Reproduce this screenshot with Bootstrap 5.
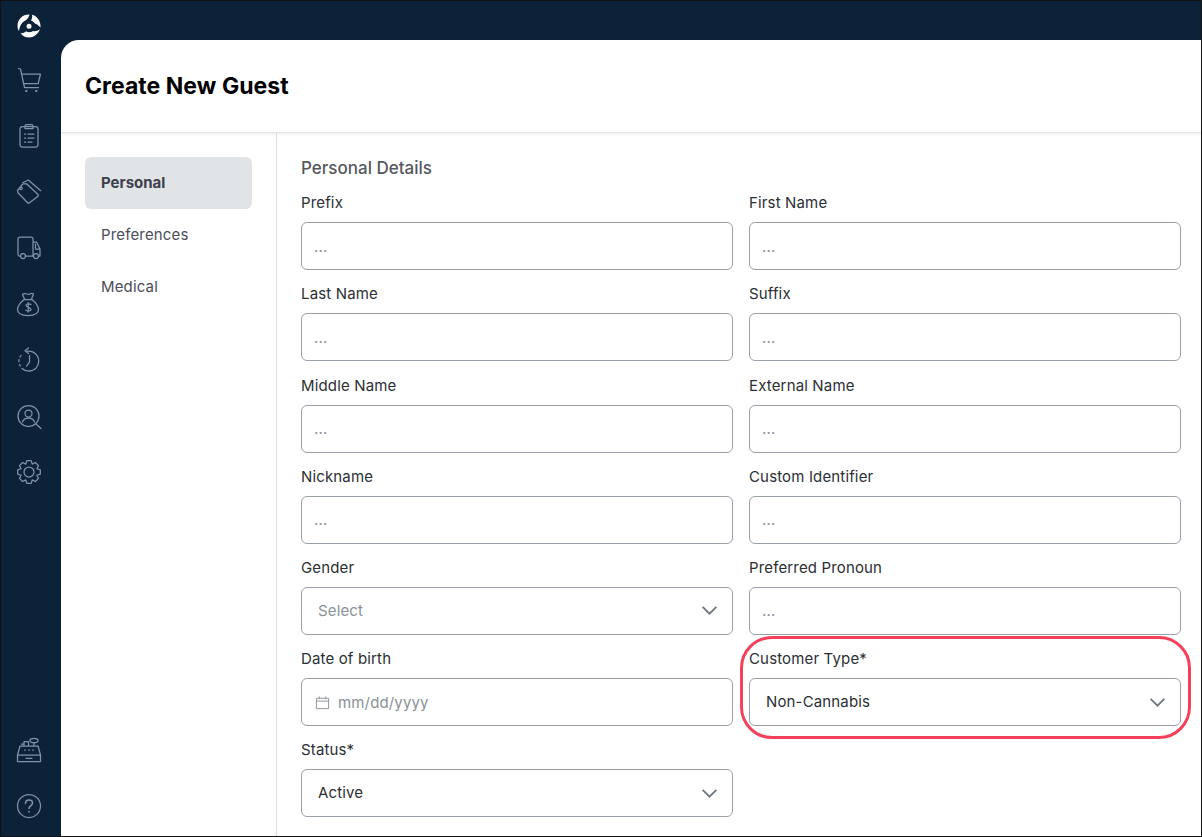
<!DOCTYPE html>
<html lang="en">
<head>
<meta charset="utf-8">
<title>Create New Guest</title>
<link rel="stylesheet" href="https://cdn.jsdelivr.net/npm/bootstrap@5.3.0/dist/css/bootstrap.min.css">
<style>
html,body{height:100%;margin:0;overflow:hidden}
body{font-family:"Inter","Noto Sans",sans-serif;font-size:15px;letter-spacing:.15px;color:#2b2f33;background:#0b2239}
.frame{width:1202px;height:837px;border:1px solid #111;background:#0b2239;position:relative;overflow:hidden}
.rail{width:60px;flex:none;background:#0b2239;padding:13px 4px 18px 0}
.rail-ico{width:24px;height:24px;display:block;overflow:visible;fill:none;stroke:#7f94a8;stroke-width:1.25;stroke-linecap:round;stroke-linejoin:round}
.rail-stack{gap:32px}
.rail-main{margin-top:30px}
.rail-logo{width:24px;height:24px;display:block;fill:#fff}
.sheet{flex:1;margin-top:39px;background:#fff;border-top-left-radius:18px;min-width:0}
.sheet-head{height:93px;padding:2px 24px 0;border-bottom:1px solid #e3e5e7;box-shadow:0 1px 3px rgba(0,0,0,.08);position:relative}
.sheet-title{font-size:23px;font-weight:700;color:#000;margin:0;letter-spacing:.05px}
.side{width:216px;flex:none;border-right:1px solid #dfe1e3;padding:24px 24px 0}
.side .nav-link{height:52px;line-height:52px;padding:0 16px;color:#4a4d59;font-size:15px;border-radius:6px}
.side .nav-link.active{background:#e1e4e6;color:#3d404c;font-weight:700;letter-spacing:0}
.pane{flex:1;padding:24px 21px 0 24px;min-width:0}
.pane-title{font-size:17px;font-weight:500;letter-spacing:0;color:#55585c;line-height:22px;margin:0 0 11.2px}
.field-grid{display:grid;grid-template-columns:432px 432px;column-gap:16px;row-gap:11.2px}
.field-grid .form-label{display:block;font-size:15px;line-height:26px;margin:0 0 6px;color:#2b2f33}
.field-grid .form-control,.field-grid .form-select{height:48px;border:1px solid #9aa1a8;border-radius:6px;font-size:15px;letter-spacing:.15px;color:#2b2f33;padding:0 16px;box-shadow:none}
.field-grid .form-control{padding-left:12px}
.field-grid .form-control::placeholder{color:#8a9197;opacity:1}
.field-grid .form-select{background-image:url("data:image/svg+xml,%3Csvg xmlns='http://www.w3.org/2000/svg' viewBox='0 0 18 12'%3E%3Cpath d='M1.5 2 9 9.5 16.5 2' fill='none' stroke='%236f7880' stroke-width='2'/%3E%3C/svg%3E");background-size:17px 11px;background-position:right 14px center}
.field-grid .form-select.is-empty{color:#8a9197}
.field-grid .date-input{padding-left:36px;background-image:url("data:image/svg+xml,%3Csvg xmlns='http://www.w3.org/2000/svg' viewBox='0 0 16 16'%3E%3Cpath d='M1.500 3.500h13v11h-13zM1.500 6.500h13M4.500 1.500v3M11.500 1.500v3' fill='none' stroke='%238a9197' stroke-width='1'/%3E%3C/svg%3E");background-repeat:no-repeat;background-size:15px 15px;background-position:13px center}
.ring{position:absolute;left:739px;top:635px;width:451px;height:103px;border:3px solid #f4405a;border-radius:32px;pointer-events:none}
</style>
</head>
<body>
<div class="frame d-flex">
  <aside class="rail d-flex flex-column align-items-center justify-content-between">
    <div>
      <svg class="rail-logo" viewBox="0 0 24 24" aria-label="logo">
        <path d="M12.500 .5C6 .2.5 5 .5 12c0 2 .5 3.500 1.500 5 .5-4 2-8 5.500-10 1.500-1 3.500-1.500 5-6.500Z"/>
        <path d="M15 .8C20 2 23.500 7 23.500 12c0 .5 0 1-.1 1.500C21.500 11 19.500 10 18 9.500 17 8 15.500 7 14 6.500 15 5 15.500 3 15 .8Z"/>
        <path d="M23 15c-2 5.500-6.500 8.500-11 8.500-3.500 0-6.500-1.500-8.500-4.500 2.500.5 4.500-.5 5.500-1.700 2 1.200 5 1.200 7-.3 2 .5 5 0 7-2Z"/>
        <circle cx="12" cy="12.300" r="2.500"/>
      </svg>
      <div class="d-flex flex-column align-items-center rail-stack rail-main">
        <svg class="rail-ico" viewBox="0 0 24 24"><path d="M1.500 .5 3.500 1l4 18.500h14M5 6h18.500l-2.300 9.500H6.800"/><path d="M9 23h.6M19 23h.6" stroke-width="1.800"/></svg>
        <svg class="rail-ico" viewBox="0 0 24 24"><rect x="3" y="2.500" width="18" height="20.500" rx="2.500"/><path d="M8 2.500V2a1.500 1.500 0 0 1 1.500-1.500h5A1.500 1.500 0 0 1 16 2v2.500H8ZM7.500 10h1.200M11 10h6M7.500 14h1.200M11 14h6M7.500 18h1.200M11 18h4"/></svg>
        <svg class="rail-ico" viewBox="0 0 24 24"><path d="M.5 10.500 5.700 4l3.800-.3L21 14.500c.6.700.5 1.300 0 1.800L12.500 22.800c-.7.600-1.300.6-1.900 0L1 12.800ZM4 7.200a1.200 1.200 0 1 0 .01 0M5.700 2.700 11.300 0l12.400 10.700"/></svg>
        <svg class="rail-ico" viewBox="0 0 24 24"><path d="M3.500 20H2.500A1.500 1.500 0 0 1 1 18.500V3a2 2 0 0 1 2-2h11a2 2 0 0 1 2 2v17H8.500M16 6h3.500l3.500 7v7h-1.500M18.500 8v5H23"/><circle cx="6" cy="20" r="2.500"/><circle cx="19" cy="20" r="2.500"/></svg>
        <svg class="rail-ico" viewBox="0 0 24 24"><path d="M7 7.500C3.500 10.500 .5 14.500 .5 17.500c0 4 3.500 6 10.500 6s10.500-2 10.500-6c0-3-3-7-6.500-10M7 7.500h7.500M7.500 7 5.500 2.500c1.500-1.500 3-1 4.500-.5s3 .2 4-.5c1.200-.5 2 0 2.500.5L14.500 7"/><path d="M14 12.500c-1-1-5-1.200-5 .8 0 2.500 5 1.500 5 4.200 0 2-4 1.800-5.200.6M11.200 10.500v9.500"/></svg>
        <svg class="rail-ico" viewBox="0 0 24 24"><path d="M9.500 3.300A10 10 0 1 1 5 20.500M3.300 18l-.7-1.500M2 13.500v-2M3 9l1-1.500"/><path d="M11.500 0 8 2.800l3.500 2.700"/><path d="M12.500 7.500V14l-3 4"/></svg>
        <svg class="rail-ico" viewBox="0 0 24 24"><circle cx="11.500" cy="12" r="10.500"/><circle cx="11.500" cy="9.500" r="3.500"/><path d="M5.500 18c.8-2.800 3-4 6-4s5.200 1.200 6 4M19 20l5 4.500"/></svg>
        <svg class="rail-ico" viewBox="0 0 24 24"><circle cx="12" cy="12" r="5"/><path d="M23.300 9.800V14.200L19.850 15.250 21.500 18.400 18.400 21.500 15.250 19.850 14.200 23.300H9.800L8.750 19.850 5.600 21.500 2.500 18.400 4.150 15.250 .7 14.200V9.800L4.150 8.750 2.500 5.600 5.600 2.500 8.750 4.150 9.800 .7H14.200L15.250 4.150 18.400 2.500 21.500 5.600 19.850 8.750Z"/></svg>
      </div>
    </div>
    <div class="d-flex flex-column align-items-center rail-stack">
      <svg class="rail-ico" viewBox="0 0 24 24"><path d="M.5 23.500h23V17l-2.500-9H3L.5 17ZM.5 17h23M9 20.300h6M7.500 12h.8M11.600 12h.8M15.700 12h.8M7 8V3.500h4.500V8M17 8V4.500M13 2.500a4 2.200 0 1 0 8 0 4 2.200 0 1 0-8 0M4.500 6H7"/></svg>
      <svg class="rail-ico" viewBox="0 0 24 24"><circle cx="12" cy="12" r="11.500"/><path d="M8.500 9.500C8.500 7 10 6 12 6s3.500 1.200 3.500 3c0 2.800-3.500 2.800-3.500 5.500M12 17.500v.5" stroke-width="1.500"/></svg>
    </div>
  </aside>
  <main class="sheet d-flex flex-column">
    <header class="sheet-head d-flex align-items-center">
      <h1 class="sheet-title">Create New Guest</h1>
    </header>
    <div class="d-flex flex-grow-1">
      <nav class="side">
        <div class="nav flex-column">
          <a class="nav-link active" href="#">Personal</a>
          <a class="nav-link" href="#">Preferences</a>
          <a class="nav-link" href="#">Medical</a>
        </div>
      </nav>
      <section class="pane">
        <h2 class="pane-title">Personal Details</h2>
        <form class="field-grid">
          <div><label class="form-label">Prefix</label><input class="form-control" placeholder="..."></div>
          <div><label class="form-label">First Name</label><input class="form-control" placeholder="..."></div>
          <div><label class="form-label">Last Name</label><input class="form-control" placeholder="..."></div>
          <div><label class="form-label">Suffix</label><input class="form-control" placeholder="..."></div>
          <div><label class="form-label">Middle Name</label><input class="form-control" placeholder="..."></div>
          <div><label class="form-label">External Name</label><input class="form-control" placeholder="..."></div>
          <div><label class="form-label">Nickname</label><input class="form-control" placeholder="..."></div>
          <div><label class="form-label">Custom Identifier</label><input class="form-control" placeholder="..."></div>
          <div><label class="form-label">Gender</label><select class="form-select is-empty"><option>Select</option></select></div>
          <div><label class="form-label">Preferred Pronoun</label><input class="form-control" placeholder="..."></div>
          <div><label class="form-label">Date of birth</label><input class="form-control date-input" placeholder="mm/dd/yyyy"></div>
          <div><label class="form-label">Customer Type*</label><select class="form-select"><option>Non-Cannabis</option></select></div>
          <div><label class="form-label">Status*</label><select class="form-select"><option>Active</option></select></div>
        </form>
      </section>
    </div>
  </main>
  <div class="ring"></div>
</div>
</body>
</html>
